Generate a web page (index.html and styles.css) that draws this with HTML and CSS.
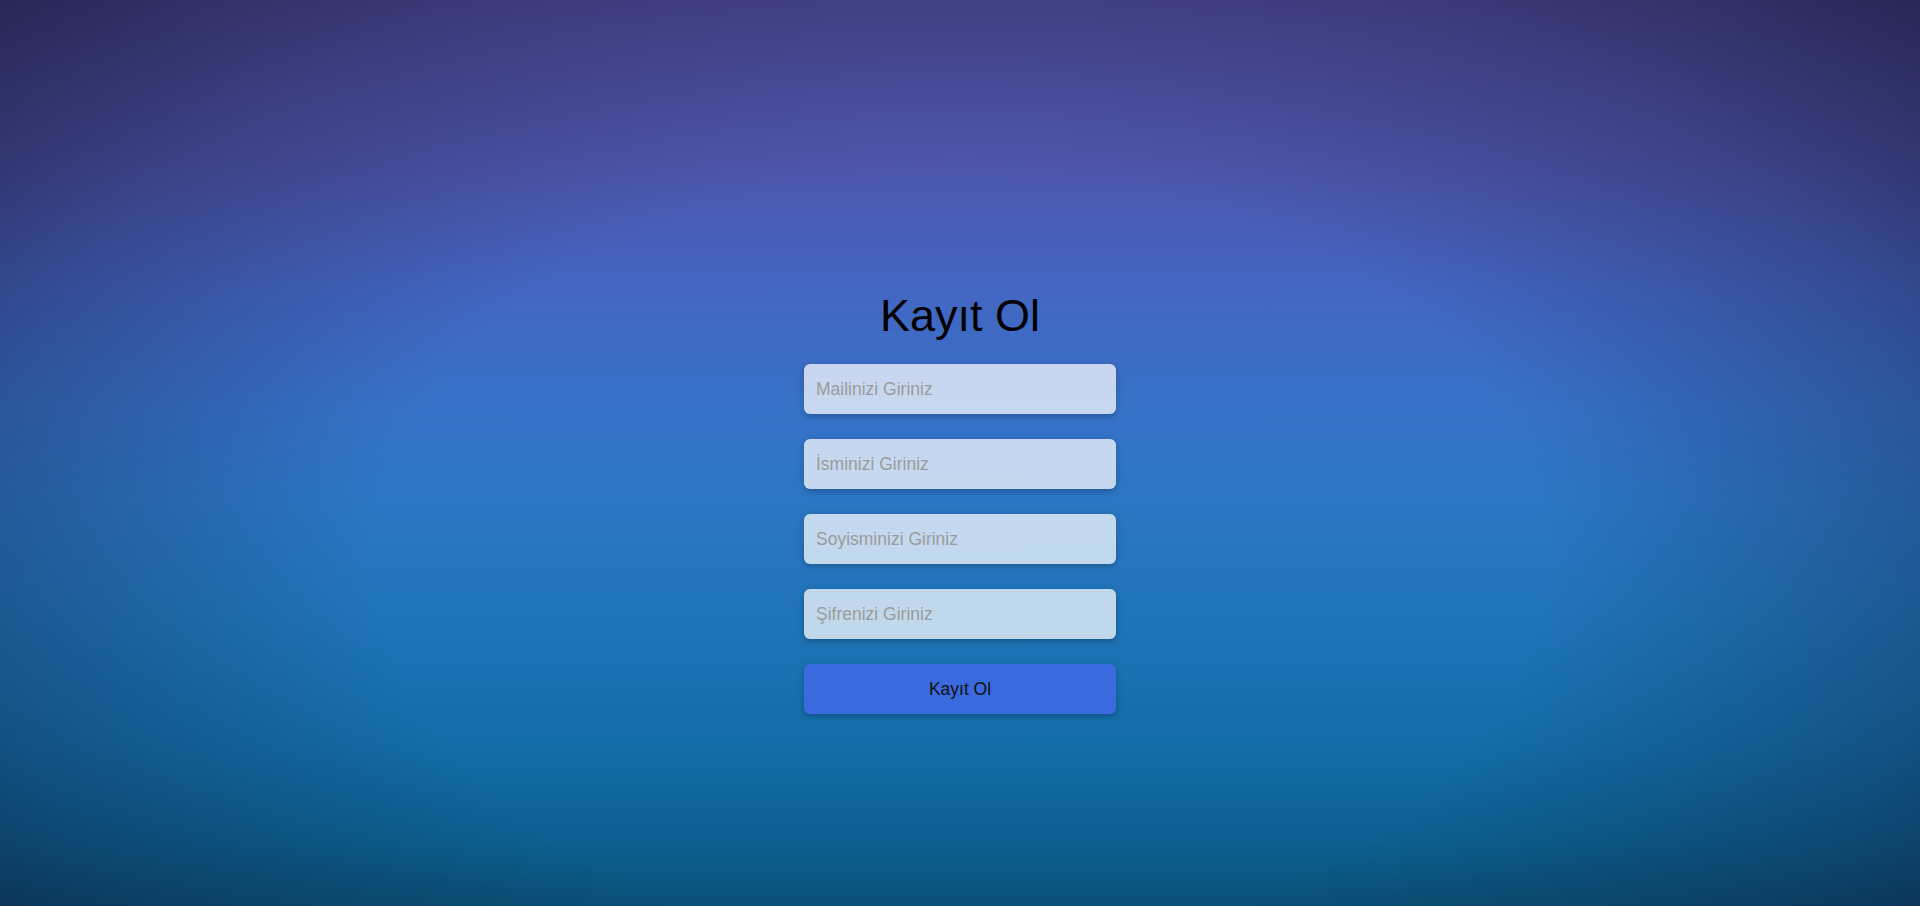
FILE: index.html
```html
<!DOCTYPE html>
<html lang="tr">
<head>
<meta charset="utf-8">
<title>Kayıt Ol</title>
<link rel="stylesheet" href="styles.css">
</head>
<body>
<main class="page">
  <form class="register">
    <h1 class="title">Kayıt Ol</h1>
    <input class="field" type="email" placeholder="Mailinizi Giriniz">
    <input class="field" type="text" placeholder="İsminizi Giriniz">
    <input class="field" type="text" placeholder="Soyisminizi Giriniz">
    <input class="field" type="password" placeholder="Şifrenizi Giriniz">
    <button class="submit" type="button">Kayıt Ol</button>
  </form>
</main>
</body>
</html>
```

FILE: styles.css
```css
html, body {
  margin: 0;
  padding: 0;
  height: 100%;
}

body {
  font-family: "Liberation Sans", Arial, sans-serif;
  background:
    radial-gradient(ellipse 68% 95% at 50% 62%, rgba(14, 14, 40, 0) 45%, rgba(14, 14, 40, 0.28) 75%, rgba(14, 14, 40, 0.6) 100%),
    linear-gradient(180deg,
      #4c4a98 0%,
      #4e56ac 18%,
      #4366c2 32%,
      #3672c8 45%,
      #2c76c4 55%,
      #2074b8 68%,
      #146ca8 82%,
      #0c5f90 93%,
      #0a5078 100%);
  overflow: hidden;
}

.page {
  height: 100%;
  display: flex;
  justify-content: center;
  align-items: flex-start;
  padding-top: 290px;
  box-sizing: border-box;
}

.register {
  display: flex;
  flex-direction: column;
  align-items: center;
  gap: 25px;
  width: 312px;
}

.title {
  margin: 0 0 -2px 0;
  font-size: 45px;
  font-weight: 400;
  color: #000;
  line-height: 51px;
}

.field {
  width: 312px;
  height: 50px;
  box-sizing: border-box;
  padding: 0 12px;
  border: none;
  border-radius: 6px;
  background: rgba(255, 255, 255, 0.72);
  box-shadow: 0 2px 6px rgba(0, 0, 0, 0.25);
  font-family: "Liberation Sans", Arial, sans-serif;
  font-size: 17.5px;
  color: #333;
  outline: none;
}

.field::placeholder {
  color: #9b9b9b;
}

.submit {
  width: 312px;
  height: 50px;
  border: none;
  border-radius: 6px;
  background: #3a6ade;
  box-shadow: 0 2px 6px rgba(0, 0, 0, 0.25);
  font-family: "Liberation Sans", Arial, sans-serif;
  font-size: 17.5px;
  color: #111;
  cursor: pointer;
}
```
